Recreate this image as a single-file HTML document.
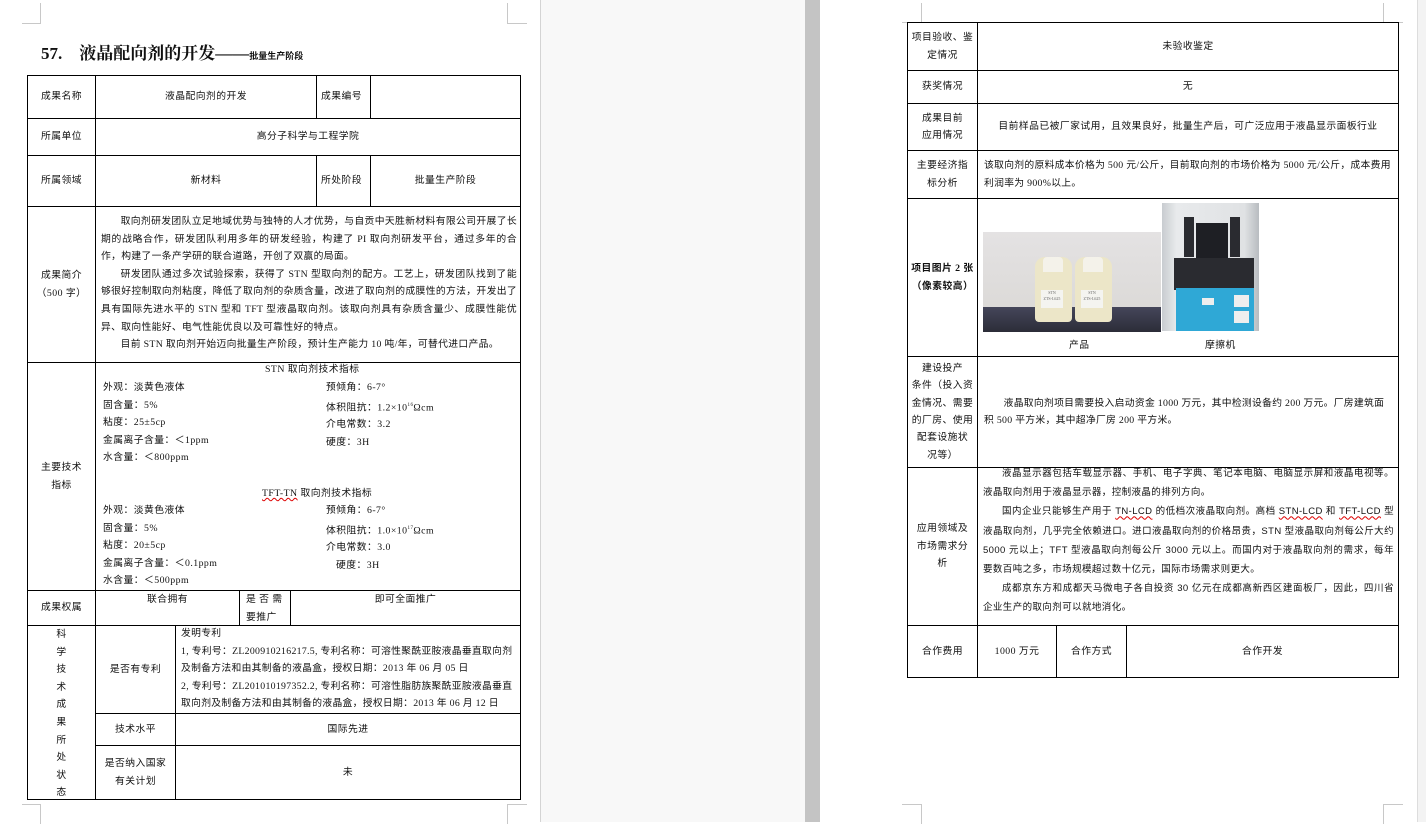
<!DOCTYPE html>
<html><head><meta charset="utf-8">
<style>
*{margin:0;padding:0;box-sizing:border-box}
body{width:1426px;height:822px;overflow:hidden;background:#fff;position:relative;font-family:"Liberation Serif","Noto Sans CJK SC","WenQuanYi Zen Hei",sans-serif;color:#111;font-size:9.8px;letter-spacing:0.45px}
.a{position:absolute}
.c{position:absolute;border:1px solid #000;display:flex;align-items:center;justify-content:center;text-align:center;line-height:17.5px}
.t{position:absolute;line-height:17.6px;white-space:nowrap}
.p{text-indent:2em}
.mk{position:absolute;border-color:#c8c8c8;border-style:solid;border-width:0}
</style></head><body>
<div class="a" style="left:540px;top:0;width:265px;height:822px;background:#f8f8f8;border-left:1px solid #d4d4d4"></div>
<div class="a" style="left:805px;top:0;width:15px;height:822px;background:#c4c4c4"></div>
<div class="a" style="left:1417px;top:0;width:9px;height:822px;background:#f3f3f3;border-left:1px solid #ddd"></div>

<div class="mk" style="left:22px;top:3px;width:19px;height:21px;border-right-width:1px;border-bottom-width:1px"></div>
<div class="mk" style="left:507px;top:3px;width:20px;height:21px;border-left-width:1px;border-bottom-width:1px"></div>
<div class="mk" style="left:22px;top:804px;width:19px;height:20px;border-right-width:1px;border-top-width:1px"></div>
<div class="mk" style="left:507px;top:804px;width:20px;height:20px;border-left-width:1px;border-top-width:1px"></div>
<div class="mk" style="left:902px;top:3px;width:20px;height:20px;border-right-width:1px;border-bottom-width:1px"></div>
<div class="mk" style="left:1383px;top:3px;width:20px;height:20px;border-left-width:1px;border-bottom-width:1px"></div>
<div class="mk" style="left:902px;top:804px;width:20px;height:20px;border-right-width:1px;border-top-width:1px"></div>
<div class="mk" style="left:1383px;top:804px;width:20px;height:20px;border-left-width:1px;border-top-width:1px"></div>

<div class="t" style="left:41px;top:42px;font-size:17px;font-weight:bold;line-height:24px;letter-spacing:0;font-family:'Liberation Serif','Noto Serif CJK SC',serif">57.&nbsp;&nbsp;&nbsp;&nbsp;液晶配向剂的开发——<span style="font-size:9px;font-family:'Liberation Sans','Noto Sans CJK SC',sans-serif">批量生产阶段</span></div>

<div class="c" style="left:27px;top:75px;width:69px;height:44px">成果名称</div>
<div class="c" style="left:95px;top:75px;width:222px;height:44px">液晶配向剂的开发</div>
<div class="c" style="left:316px;top:75px;width:55px;height:44px;justify-content:flex-start;padding-left:4px">成果编号</div>
<div class="c" style="left:370px;top:75px;width:151px;height:44px"></div>

<div class="c" style="left:27px;top:118px;width:69px;height:38px">所属单位</div>
<div class="c" style="left:95px;top:118px;width:426px;height:38px">高分子科学与工程学院</div>

<div class="c" style="left:27px;top:155px;width:69px;height:52px">所属领域</div>
<div class="c" style="left:95px;top:155px;width:222px;height:52px">新材料</div>
<div class="c" style="left:316px;top:155px;width:55px;height:52px;justify-content:flex-start;padding-left:4px">所处阶段</div>
<div class="c" style="left:370px;top:155px;width:151px;height:52px">批量生产阶段</div>

<div class="c" style="left:27px;top:206px;width:69px;height:157px">成果简介<br>（500 字）</div>
<div class="c" style="left:95px;top:206px;width:426px;height:157px"></div>
<div class="a" style="left:101px;top:213px;width:416px;line-height:17.6px;text-align:justify;letter-spacing:0.33px">
<div class="p">取向剂研发团队立足地域优势与独特的人才优势，与自贡中天胜新材料有限公司开展了长期的战略合作，研发团队利用多年的研发经验，构建了 PI 取向剂研发平台，通过多年的合作，构建了一条产学研的联合道路，开创了双赢的局面。</div>
<div class="p">研发团队通过多次试验探索，获得了 STN 型取向剂的配方。工艺上，研发团队找到了能够很好控制取向剂粘度，降低了取向剂的杂质含量，改进了取向剂的成膜性的方法，开发出了具有国际先进水平的 STN 型和 TFT 型液晶取向剂。该取向剂具有杂质含量少、成膜性能优异、取向性能好、电气性能优良以及可靠性好的特点。</div>
<div class="p">目前 STN 取向剂开始迈向批量生产阶段，预计生产能力 10 吨/年，可替代进口产品。</div>
</div>

<div class="c" style="left:27px;top:362px;width:69px;height:229px">主要技术<br>指标</div>
<div class="c" style="left:95px;top:362px;width:426px;height:229px"></div>
<div class="t" style="left:265px;top:361px">STN 取向剂技术指标</div>
<div class="t" style="left:103px;top:379px">外观：淡黄色液体<br>固含量：5%<br>粘度：25±5cp<br>金属离子含量：＜1ppm<br>水含量：＜800ppm</div>
<div class="t" style="left:326px;top:379px">预倾角：6-7°<br>体积阻抗：1.2×10<sup style="font-size:5px">16</sup>Ωcm<br>介电常数：3.2<br>硬度：3H</div>
<div class="t" style="left:262px;top:485px"><span style="text-decoration:underline wavy #d00">TFT-TN</span> 取向剂技术指标</div>
<div class="t" style="left:103px;top:502px">外观：淡黄色液体<br>固含量：5%<br>粘度：20±5cp<br>金属离子含量：＜0.1ppm<br>水含量：＜500ppm</div>
<div class="t" style="left:326px;top:502px">预倾角：6-7°<br>体积阻抗：1.0×10<sup style="font-size:5px">17</sup>Ωcm<br>介电常数：3.0<br><span style="padding-left:10px">硬度：3H</span></div>

<div class="c" style="left:27px;top:590px;width:69px;height:36px">成果权属</div>
<div class="c" style="left:95px;top:590px;width:145px;height:36px;align-items:flex-start">联合拥有</div>
<div class="c" style="left:239px;top:590px;width:52px;height:36px;align-items:flex-start;text-align:left;padding-left:6px;justify-content:flex-start">是 否 需<br>要推广</div>
<div class="c" style="left:290px;top:590px;width:231px;height:36px;align-items:flex-start">即可全面推广</div>

<div class="c" style="left:27px;top:625px;width:69px;height:175px;line-height:17.6px;align-items:flex-start">科<br>学<br>技<br>术<br>成<br>果<br>所<br>处<br>状<br>态</div>
<div class="c" style="left:95px;top:625px;width:81px;height:89px">是否有专利</div>
<div class="c" style="left:175px;top:625px;width:346px;height:89px"></div>
<div class="a" style="left:181px;top:625px;width:336px;line-height:17.6px;letter-spacing:0.3px">发明专利<br>1, 专利号：ZL200910216217.5, 专利名称：可溶性聚酰亚胺液晶垂直取向剂及制备方法和由其制备的液晶盒，授权日期：2013 年 06 月 05 日<br>2, 专利号：ZL201010197352.2, 专利名称：可溶性脂肪族聚酰亚胺液晶垂直取向剂及制备方法和由其制备的液晶盒，授权日期：2013 年 06 月 12 日</div>
<div class="c" style="left:95px;top:713px;width:81px;height:33px">技术水平</div>
<div class="c" style="left:175px;top:713px;width:346px;height:33px">国际先进</div>
<div class="c" style="left:95px;top:745px;width:81px;height:55px">是否纳入国家<br>有关计划</div>
<div class="c" style="left:175px;top:745px;width:346px;height:55px">未</div>

<div class="c" style="left:907px;top:22px;width:71px;height:49px">项目验收、鉴<br>定情况</div>
<div class="c" style="left:977px;top:22px;width:422px;height:49px">未验收鉴定</div>
<div class="c" style="left:907px;top:70px;width:71px;height:34px">获奖情况</div>
<div class="c" style="left:977px;top:70px;width:422px;height:34px">无</div>
<div class="c" style="left:907px;top:103px;width:71px;height:48px">成果目前<br>应用情况</div>
<div class="c" style="left:977px;top:103px;width:422px;height:48px">目前样品已被厂家试用，且效果良好，批量生产后，可广泛应用于液晶显示面板行业</div>
<div class="c" style="left:907px;top:150px;width:71px;height:49px">主要经济指<br>标分析</div>
<div class="c" style="left:977px;top:150px;width:422px;height:49px;justify-content:flex-start;text-align:left;padding-left:6px;letter-spacing:0.3px">该取向剂的原料成本价格为 500 元/公斤，目前取向剂的市场价格为 5000 元/公斤，成本费用利润率为 900%以上。</div>
<div class="c" style="left:907px;top:198px;width:71px;height:159px;font-weight:bold">项目图片 2 张<br>（像素较高）</div>
<div class="c" style="left:977px;top:198px;width:422px;height:159px"></div>
<div class="a" style="left:983px;top:232px;width:178px;height:100px;background:linear-gradient(#e4e2e3,#dcdad8 75%,#45465a 75%,#2c2d38);overflow:hidden">
 <div class="a" style="left:52px;top:25px;width:37px;height:65px;background:#ece6c8;border-radius:10px 10px 4px 4px"></div>
 <div class="a" style="left:60px;top:25px;width:20px;height:15px;background:#f4f2ea;border-radius:4px 4px 0 0"></div>
 <div class="a" style="left:92px;top:25px;width:37px;height:65px;background:#ece6c8;border-radius:10px 10px 4px 4px"></div>
 <div class="a" style="left:100px;top:25px;width:20px;height:15px;background:#f4f2ea;border-radius:4px 4px 0 0"></div>
 <div class="a" style="left:58px;top:58px;width:22px;height:18px;background:#f4f4f0;font-size:4px;line-height:6px;letter-spacing:0;text-align:center;color:#666">STN<br>ZTS-L625</div>
 <div class="a" style="left:98px;top:58px;width:22px;height:18px;background:#f4f4f0;font-size:4px;line-height:6px;letter-spacing:0;text-align:center;color:#666">STN<br>ZTS-L625</div>
</div>
<div class="a" style="left:1162px;top:203px;width:97px;height:128px;background:linear-gradient(90deg,#c8ccd0,#e8eaec 15%,#e0e2e4 85%,#b8bcc0);overflow:hidden">
 <div class="a" style="left:22px;top:14px;width:10px;height:40px;background:#2a2b30"></div>
 <div class="a" style="left:68px;top:14px;width:10px;height:40px;background:#2a2b30"></div>
 <div class="a" style="left:34px;top:20px;width:32px;height:35px;background:#1e1f24"></div>
 <div class="a" style="left:12px;top:55px;width:80px;height:32px;background:#2a2b30"></div>
 <div class="a" style="left:14px;top:85px;width:78px;height:43px;background:#2fa8d6"></div>
 <div class="a" style="left:40px;top:95px;width:12px;height:7px;background:#eee"></div>
 <div class="a" style="left:72px;top:92px;width:15px;height:12px;background:#eee"></div>
 <div class="a" style="left:72px;top:108px;width:15px;height:12px;background:#eee"></div>
</div>
<div class="t" style="left:1069px;top:337px">产品</div>
<div class="t" style="left:1205px;top:337px">摩擦机</div>

<div class="c" style="left:907px;top:356px;width:71px;height:112px;line-height:17.4px">建设投产<br>条件（投入资<br>金情况、需要<br>的厂房、使用<br>配套设施状<br>况等）</div>
<div class="c" style="left:977px;top:356px;width:422px;height:112px;justify-content:flex-start;text-align:left;padding:0 6px;text-indent:2em;letter-spacing:0.3px">液晶取向剂项目需要投入启动资金 1000 万元，其中检测设备约 200 万元。厂房建筑面积 500 平方米，其中超净厂房 200 平方米。</div>

<div class="c" style="left:907px;top:467px;width:71px;height:159px">应用领域及<br>市场需求分<br>析</div>
<div class="c" style="left:977px;top:467px;width:422px;height:159px"></div>
<div class="a" style="left:983px;top:464px;width:411px;line-height:19.2px;text-align:justify;font-family:'Liberation Sans','Noto Sans CJK SC',sans-serif;font-size:9.5px;letter-spacing:0.4px">
<div class="p">液晶显示器包括车载显示器、手机、电子字典、笔记本电脑、电脑显示屏和液晶电视等。液晶取向剂用于液晶显示器，控制液晶的排列方向。</div>
<div class="p">国内企业只能够生产用于 <u style="text-decoration:underline wavy #d00">TN-LCD</u> 的低档次液晶取向剂。高档 <u style="text-decoration:underline wavy #d00">STN-LCD</u> 和 <u style="text-decoration:underline wavy #d00">TFT-LCD</u> 型液晶取向剂，几乎完全依赖进口。进口液晶取向剂的价格昂贵，STN 型液晶取向剂每公斤大约 5000 元以上；TFT 型液晶取向剂每公斤 3000 元以上。而国内对于液晶取向剂的需求，每年要数百吨之多，市场规模超过数十亿元，国际市场需求则更大。</div>
<div class="p">成都京东方和成都天马微电子各自投资 30 亿元在成都高新西区建面板厂，因此，四川省企业生产的取向剂可以就地消化。</div>
</div>

<div class="c" style="left:907px;top:625px;width:71px;height:53px">合作费用</div>
<div class="c" style="left:977px;top:625px;width:80px;height:53px">1000 万元</div>
<div class="c" style="left:1056px;top:625px;width:71px;height:53px">合作方式</div>
<div class="c" style="left:1126px;top:625px;width:273px;height:53px">合作开发</div>
</body></html>
